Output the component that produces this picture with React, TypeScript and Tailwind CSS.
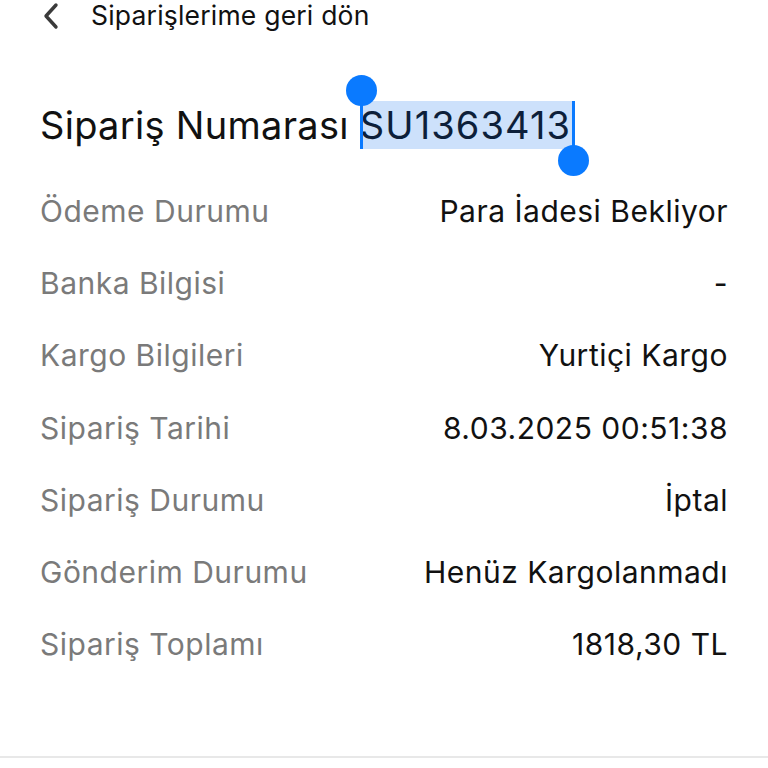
import React from "react";

const rows: [string, string][] = [
  ["Ödeme Durumu", "Para İadesi Bekliyor"],
  ["Banka Bilgisi", "-"],
  ["Kargo Bilgileri", "Yurtiçi Kargo"],
  ["Sipariş Tarihi", "8.03.2025 00:51:38"],
  ["Sipariş Durumu", "İptal"],
  ["Gönderim Durumu", "Henüz Kargolanmadı"],
  ["Sipariş Toplamı", "1818,30 TL"],
];

export default function App() {
  return (
    <div
      className="w-full h-[768px] bg-white overflow-hidden flex flex-col"
      style={{ fontFamily: "Inter, 'Noto Sans', sans-serif" }}
    >
      <div className="h-[32px] flex items-center pl-[42px] gap-[29px]">
        <svg width="20" height="28" viewBox="0 0 20 28" fill="none">
          <path d="M14 3 L4 14 L14 25" stroke="#3a3a3a" strokeWidth="3.4" strokeLinecap="round" strokeLinejoin="round" />
        </svg>
        <span className="text-[26.5px] text-[#111] tracking-[0.2px]">Siparişlerime geri dön</span>
      </div>

      <div className="px-[40px] pt-[68px]">
        <div className="h-[50px] flex items-center text-[38px] text-[#111]">
          <span className="tracking-[0.3px]">Sipariş Numarası&nbsp;</span>
          <span className="relative bg-[#cde1fb] text-[#0d1f3a] h-[48px] flex items-center pr-[2px] tracking-[1.1px]">
            SU1363413
            <span className="absolute left-0 top-[2px] w-[3px] h-[46px] bg-[#0a7aff]" />
            <span className="absolute left-[-14px] top-[-26px] w-[31px] h-[31px] rounded-full bg-[#0a7aff]" />
            <span className="absolute right-[-2px] top-0 w-[3px] h-[46px] bg-[#0a7aff]" />
            <span className="absolute right-[-16px] top-[44px] w-[31px] h-[31px] rounded-full bg-[#0a7aff]" />
          </span>
        </div>

        <div className="mt-[25px] flex flex-col">
          {rows.map(([k, v]) => (
            <div key={k} className="h-[72.3px] flex items-center justify-between text-[30px] tracking-[0.5px]">
              <span className="text-[#7a7a7a]">{k}</span>
              <span className="text-[#111]">{v}</span>
            </div>
          ))}
        </div>
      </div>

      <div className="mt-auto mb-[10px] h-[2px] bg-[#e8e8e8]" />
    </div>
  );
}
